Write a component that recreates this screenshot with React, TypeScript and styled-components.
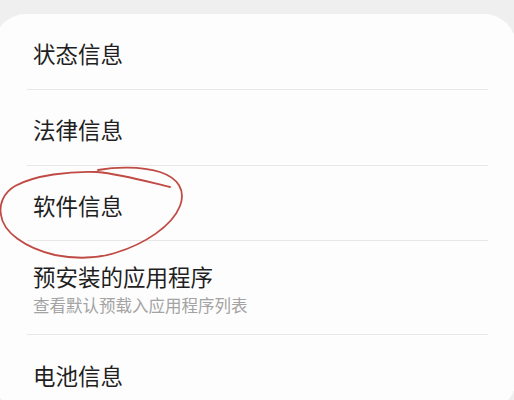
import React from "react";
import styled, { createGlobalStyle } from "styled-components";

const Global = createGlobalStyle`
  html, body {
    margin: 0;
    padding: 0;
    background: #efefef;
    overflow: hidden;
  }
  body {
    font-family: "Noto Sans CJK SC", "Noto Sans", sans-serif;
  }
`;

const Page = styled.div`
  position: relative;
  width: 514px;
  height: 400px;
  overflow: hidden;
  background: #efefef;
  padding-top: 14px;
  box-sizing: border-box;
`;

const Card = styled.div`
  margin-left: -6px;
  width: 522px;
  background: #fdfdfd;
  border-radius: 32px;
  display: flex;
  flex-direction: column;
`;

const Row = styled.div<{ $h: number; $last?: boolean }>`
  height: ${(p) => p.$h}px;
  margin: 0 28px 0 33px;
  padding: 3px 0 0 6px;
  box-sizing: border-box;
  border-bottom: ${(p) => (p.$last ? "none" : "1.5px solid #e7e7e7")};
  display: flex;
  flex-direction: column;
  justify-content: center;
`;

const Title = styled.div`
  font-size: 22.5px;
  line-height: 30px;
  color: #1f1f1f;
`;

const Sub = styled.div`
  font-size: 16.5px;
  line-height: 24px;
  color: #a3a3a3;
  margin-top: 2px;
`;

const Annotation = styled.svg`
  position: absolute;
  left: 0;
  top: 0;
  overflow: visible;
  pointer-events: none;
`;

const rows: { title: string; sub?: string; h: number }[] = [
  { title: "状态信息", h: 76 },
  { title: "法律信息", h: 76 },
  { title: "软件信息", h: 75 },
  { title: "预安装的应用程序", sub: "查看默认预载入应用程序列表", h: 94 },
  { title: "电池信息", h: 76 },
];

export default function App() {
  return (
    <>
      <Global />
      <Page>
        <Card>
          {rows.map((r, i) => (
            <Row key={r.title} $h={r.h} $last={i === rows.length - 1}>
              <Title>{r.title}</Title>
              {r.sub && <Sub>{r.sub}</Sub>}
            </Row>
          ))}
        </Card>
        <Annotation width="514" height="400" viewBox="0 0 514 400">
          <path
            d="M170,187 C145,181 120,174 97,172 C70,171 35,175 15,186 C3,193 -1,205 1,215 C3,232 25,248 55,255 C75,259 95,259 115,253 C145,244 172,226 180,206 C186,190 178,178 160,172 C140,166 115,167 98,170"
            fill="none"
            stroke="#c04a44"
            strokeWidth="1.8"
            strokeLinecap="round"
            strokeLinejoin="round"
          />
        </Annotation>
      </Page>
    </>
  );
}
